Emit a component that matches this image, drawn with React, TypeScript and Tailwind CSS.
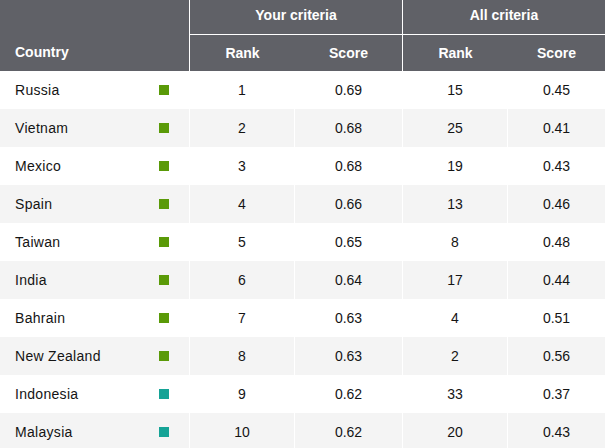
import React from 'react';

// rows of the ranking table
interface Row {
  country: string;
  region: 'green' | 'teal';
  rank: number;
  score: string;
  allRank: number;
  allScore: string;
}

const rows: Row[] = [
  { country: 'Russia', region: 'green', rank: 1, score: '0.69', allRank: 15, allScore: '0.45' },
  { country: 'Vietnam', region: 'green', rank: 2, score: '0.68', allRank: 25, allScore: '0.41' },
  { country: 'Mexico', region: 'green', rank: 3, score: '0.68', allRank: 19, allScore: '0.43' },
  { country: 'Spain', region: 'green', rank: 4, score: '0.66', allRank: 13, allScore: '0.46' },
  { country: 'Taiwan', region: 'green', rank: 5, score: '0.65', allRank: 8, allScore: '0.48' },
  { country: 'India', region: 'green', rank: 6, score: '0.64', allRank: 17, allScore: '0.44' },
  { country: 'Bahrain', region: 'green', rank: 7, score: '0.63', allRank: 4, allScore: '0.51' },
  { country: 'New Zealand', region: 'green', rank: 8, score: '0.63', allRank: 2, allScore: '0.56' },
  { country: 'Indonesia', region: 'teal', rank: 9, score: '0.62', allRank: 33, allScore: '0.37' },
  { country: 'Malaysia', region: 'teal', rank: 10, score: '0.62', allRank: 20, allScore: '0.43' },
];

const cols = 'grid grid-cols-[190px_105px_108px_105px_97px]';

export default function App() {
  return (
    <div
      className="w-[605px] h-[448px] overflow-hidden bg-white text-[14px] text-[#141414]"
      style={{ fontFamily: '"Liberation Sans", Arial, sans-serif' }}
    >
      {/* header */}
      <div className={`${cols} grid-rows-[35px_36px] bg-[#606167] text-white font-bold`}>
        <div className="row-span-2 border-r border-white flex items-end pl-[15px] pb-[8px]">Country</div>
        <div className="col-span-2 border-r border-b border-white flex items-center justify-center pb-[3px]">
          Your criteria
        </div>
        <div className="col-span-2 border-b border-white flex items-center justify-center pb-[3px]">
          All criteria
        </div>
        <div className="flex items-center justify-center">Rank</div>
        <div className="border-r border-white flex items-center justify-center">Score</div>
        <div className="flex items-center justify-center">Rank</div>
        <div className="flex items-center justify-center">Score</div>
      </div>

      {/* body */}
      {rows.map((row, i) => (
        <div key={row.country} className={`${cols} h-[38px] ${i % 2 === 1 ? 'bg-[#f4f4f4]' : 'bg-white'}`}>
          <div className="flex items-center pl-[15px] border-r border-white">
            <span className="flex-1 tracking-[0.3px]">{row.country}</span>
            <span
              className={`w-[10px] h-[10px] mr-[20px] ${row.region === 'green' ? 'bg-[#5a9a08]' : 'bg-[#15a396]'}`}
            />
          </div>
          <div className="flex items-center justify-center border-r border-white">{row.rank}</div>
          <div className="flex items-center justify-center border-r border-white">{row.score}</div>
          <div className="flex items-center justify-center border-r border-white">{row.allRank}</div>
          <div className="flex items-center justify-center">{row.allScore}</div>
        </div>
      ))}
    </div>
  );
}
